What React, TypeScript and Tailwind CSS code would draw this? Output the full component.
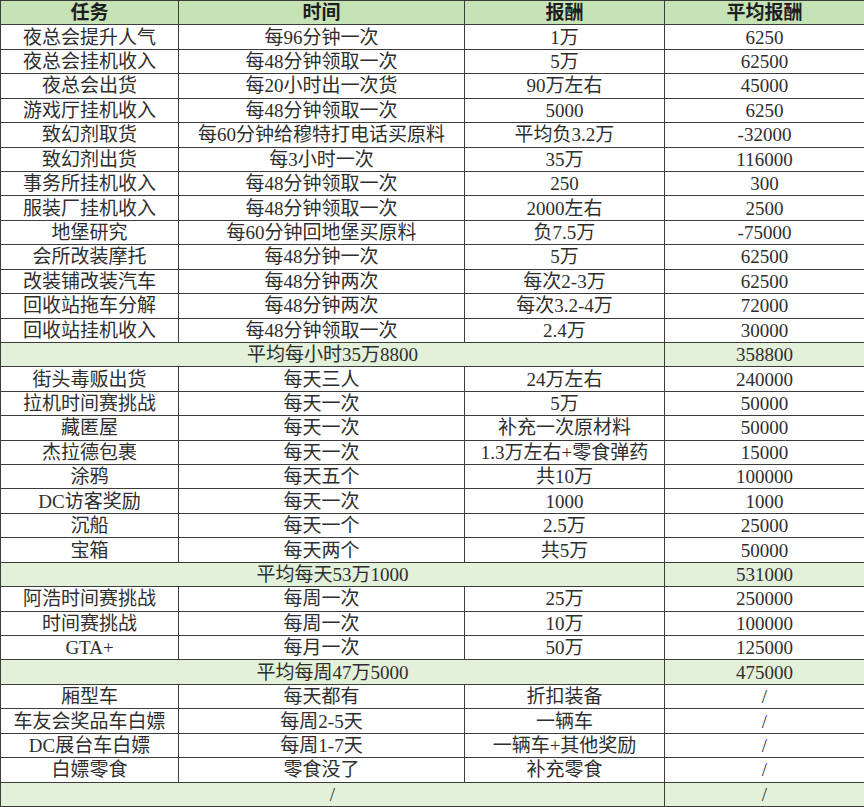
import React from 'react';

type Row =
  | { kind: 'data'; cells: [string, string, string, string] }
  | { kind: 'sum'; label: string; value: string };

const rows: Row[] = [
  { kind: 'data', cells: ['夜总会提升人气', '每96分钟一次', '1万', '6250'] },
  { kind: 'data', cells: ['夜总会挂机收入', '每48分钟领取一次', '5万', '62500'] },
  { kind: 'data', cells: ['夜总会出货', '每20小时出一次货', '90万左右', '45000'] },
  { kind: 'data', cells: ['游戏厅挂机收入', '每48分钟领取一次', '5000', '6250'] },
  { kind: 'data', cells: ['致幻剂取货', '每60分钟给穆特打电话买原料', '平均负3.2万', '-32000'] },
  { kind: 'data', cells: ['致幻剂出货', '每3小时一次', '35万', '116000'] },
  { kind: 'data', cells: ['事务所挂机收入', '每48分钟领取一次', '250', '300'] },
  { kind: 'data', cells: ['服装厂挂机收入', '每48分钟领取一次', '2000左右', '2500'] },
  { kind: 'data', cells: ['地堡研究', '每60分钟回地堡买原料', '负7.5万', '-75000'] },
  { kind: 'data', cells: ['会所改装摩托', '每48分钟一次', '5万', '62500'] },
  { kind: 'data', cells: ['改装铺改装汽车', '每48分钟两次', '每次2-3万', '62500'] },
  { kind: 'data', cells: ['回收站拖车分解', '每48分钟两次', '每次3.2-4万', '72000'] },
  { kind: 'data', cells: ['回收站挂机收入', '每48分钟领取一次', '2.4万', '30000'] },
  { kind: 'sum', label: '平均每小时35万8800', value: '358800' },
  { kind: 'data', cells: ['街头毒贩出货', '每天三人', '24万左右', '240000'] },
  { kind: 'data', cells: ['拉机时间赛挑战', '每天一次', '5万', '50000'] },
  { kind: 'data', cells: ['藏匿屋', '每天一次', '补充一次原材料', '50000'] },
  { kind: 'data', cells: ['杰拉德包裹', '每天一次', '1.3万左右+零食弹药', '15000'] },
  { kind: 'data', cells: ['涂鸦', '每天五个', '共10万', '100000'] },
  { kind: 'data', cells: ['DC访客奖励', '每天一次', '1000', '1000'] },
  { kind: 'data', cells: ['沉船', '每天一个', '2.5万', '25000'] },
  { kind: 'data', cells: ['宝箱', '每天两个', '共5万', '50000'] },
  { kind: 'sum', label: '平均每天53万1000', value: '531000' },
  { kind: 'data', cells: ['阿浩时间赛挑战', '每周一次', '25万', '250000'] },
  { kind: 'data', cells: ['时间赛挑战', '每周一次', '10万', '100000'] },
  { kind: 'data', cells: ['GTA+', '每月一次', '50万', '125000'] },
  { kind: 'sum', label: '平均每周47万5000', value: '475000' },
  { kind: 'data', cells: ['厢型车', '每天都有', '折扣装备', '/'] },
  { kind: 'data', cells: ['车友会奖品车白嫖', '每周2-5天', '一辆车', '/'] },
  { kind: 'data', cells: ['DC展台车白嫖', '每周1-7天', '一辆车+其他奖励', '/'] },
  { kind: 'data', cells: ['白嫖零食', '零食没了', '补充零食', '/'] },
  { kind: 'sum', label: '/', value: '/' },
];

const cell = 'flex items-center justify-center border-r border-b border-[#3c3c3c] whitespace-nowrap overflow-hidden';

export default function App() {
  return (
    <div className="w-[864px] h-[807px] bg-white text-[#2e2e2e] text-[19px] leading-none font-['Liberation_Serif','Noto_Sans_CJK_SC',serif]">
      <div className="grid h-[807px] grid-cols-[178px_286px_200px_200px] grid-rows-[repeat(33,minmax(0,1fr))] border-l border-t border-[#3c3c3c]">
        {['任务', '时间', '报酬', '平均报酬'].map((h) => (
          <div key={h} className={`${cell} bg-[#c6e3b6] font-bold text-[#1e1e1e]`}>
            {h}
          </div>
        ))}
        {rows.map((r, i) =>
          r.kind === 'data' ? (
            r.cells.map((c, j) => (
              <div key={`${i}-${j}`} className={cell}>
                {c}
              </div>
            ))
          ) : (
            <React.Fragment key={i}>
              <div className={`${cell} col-span-3 bg-[#e3f0da]`}>{r.label}</div>
              <div className={`${cell} bg-[#e3f0da]`}>{r.value}</div>
            </React.Fragment>
          )
        )}
      </div>
    </div>
  );
}
